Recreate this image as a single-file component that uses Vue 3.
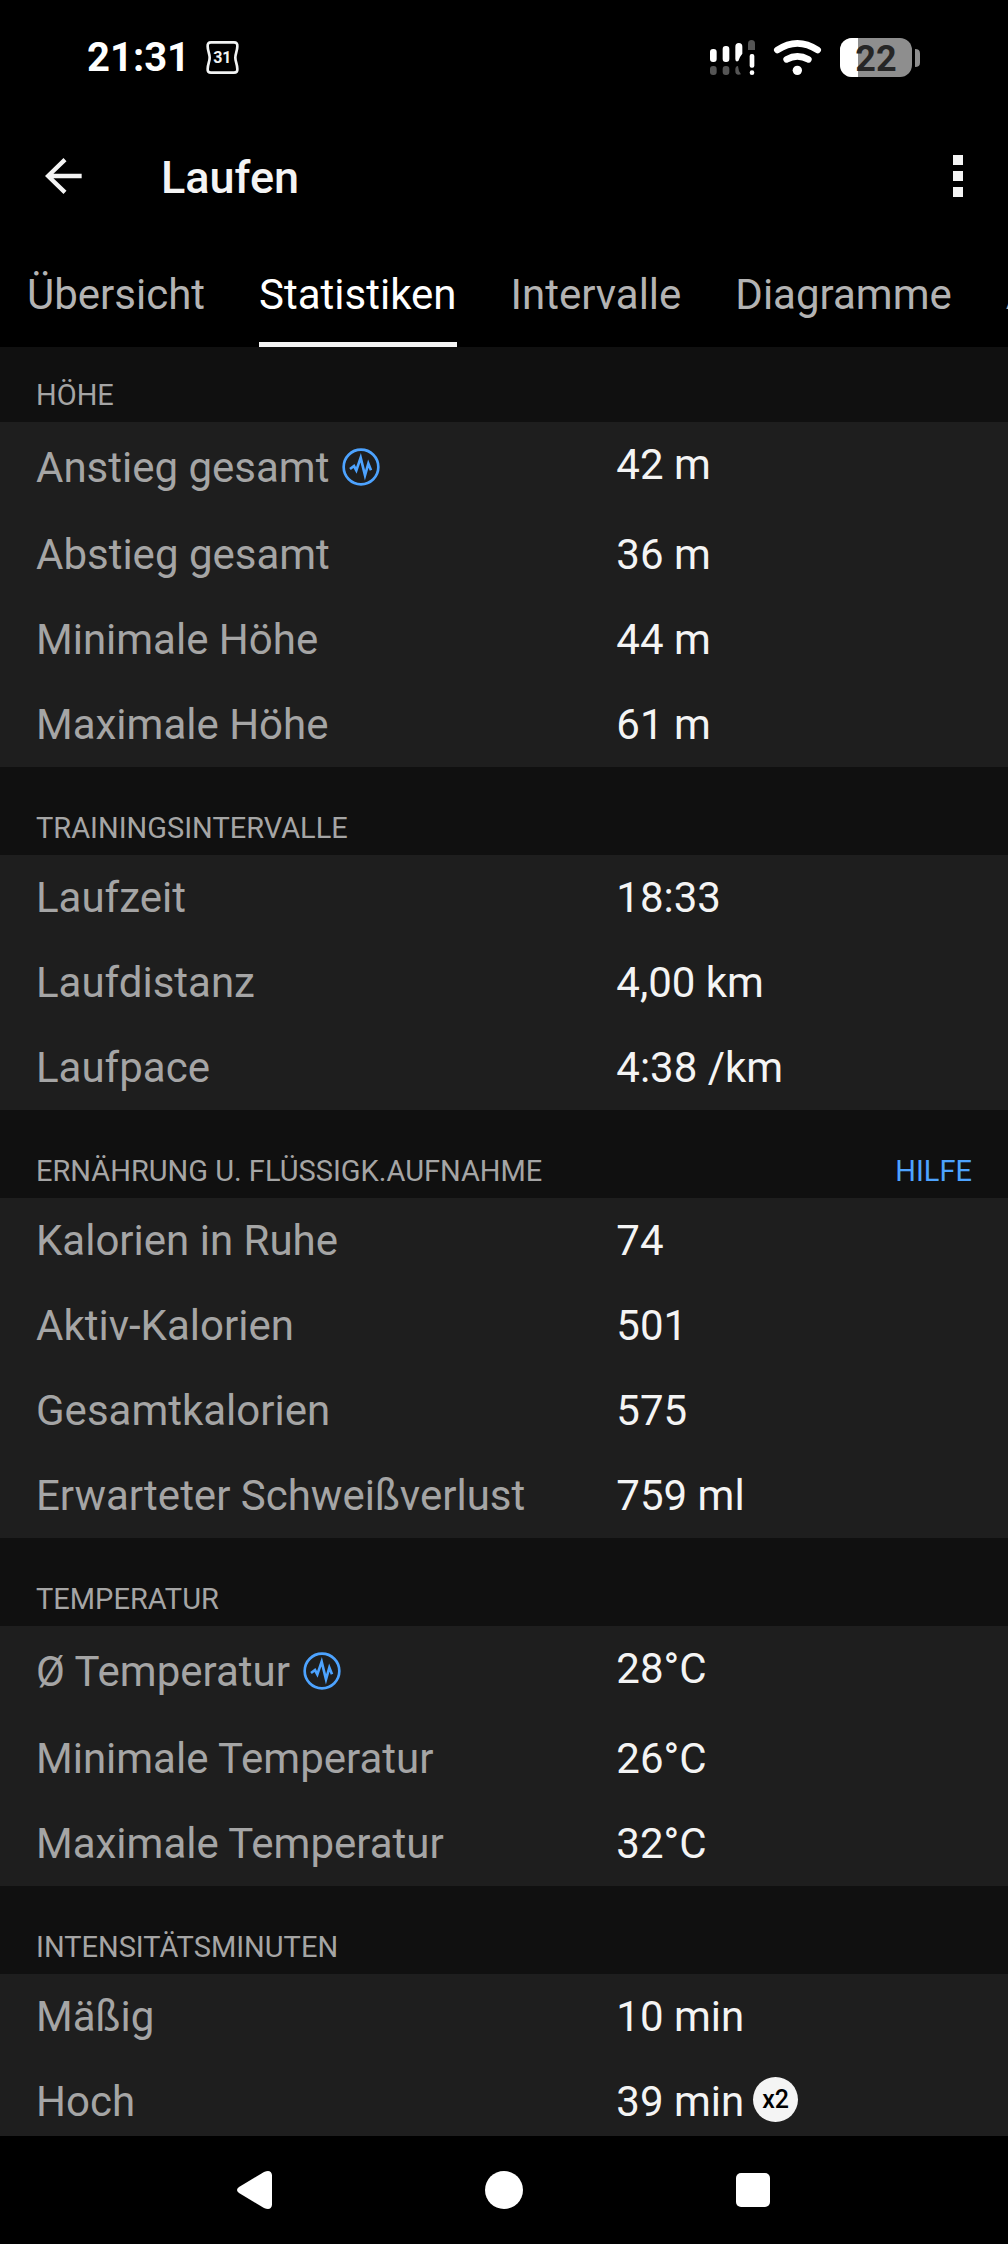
<script setup>
import { ref } from 'vue'

const tabs = ['Übersicht', 'Statistiken', 'Intervalle', 'Diagramme', 'Ausrüstung']
const activeTab = ref('Statistiken')

const sections = [
  {
    title: 'Höhe',
    rows: [
      { label: 'Anstieg gesamt', value: '42 m', chart: true },
      { label: 'Abstieg gesamt', value: '36 m' },
      { label: 'Minimale Höhe', value: '44 m' },
      { label: 'Maximale Höhe', value: '61 m' }
    ]
  },
  {
    title: 'Trainingsintervalle',
    rows: [
      { label: 'Laufzeit', value: '18:33' },
      { label: 'Laufdistanz', value: '4,00 km' },
      { label: 'Laufpace', value: '4:38 /km' }
    ]
  },
  {
    title: 'Ernährung u. Flüssigk.aufnahme',
    help: true,
    rows: [
      { label: 'Kalorien in Ruhe', value: '74' },
      { label: 'Aktiv-Kalorien', value: '501' },
      { label: 'Gesamtkalorien', value: '575' },
      { label: 'Erwarteter Schweißverlust', value: '759 ml' }
    ]
  },
  {
    title: 'Temperatur',
    rows: [
      { label: 'Ø Temperatur', value: '28°C', chart: true },
      { label: 'Minimale Temperatur', value: '26°C' },
      { label: 'Maximale Temperatur', value: '32°C' }
    ]
  },
  {
    title: 'Intensitätsminuten',
    rows: [
      { label: 'Mäßig', value: '10 min' },
      { label: 'Hoch', value: '39 min', badge: 'x2' }
    ]
  }
]
</script>

<template>
  <div class="screen">
    <!-- Status bar -->
    <div class="status-bar">
      <span class="clock">21:31</span>
      <svg class="calendar" viewBox="0 0 99 99" width="33" height="33">
        <path
          d="M15 4H84Q95 4 94 16C94 30 88 38 88 50C88 62 94 70 94 84Q95 95 84 95H15Q4 95 5 84C5 70 11 62 11 50C11 38 5 30 5 16Q4 4 15 4Z"
          fill="none"
          stroke="#f2f4f4"
          stroke-width="8"
        />
        <text x="49" y="67" text-anchor="middle" class="calendar-day">31</text>
      </svg>

      <div class="status-icons">
        <!-- Signal -->
        <svg viewBox="54 48 141 120" width="47" height="40">
          <g fill="#fff">
            <rect x="57" y="84" width="20" height="39" rx="9" />
            <rect x="95" y="75" width="20" height="48" rx="9" />
            <path d="M133 77Q133 66 143.500 66Q154 66 154 77V98Q146 107 142 120Q133 124 133 114Z" />
            <rect x="176" y="99" width="14" height="41" rx="6" />
            <circle cx="183" cy="155" r="7" />
          </g>
          <g fill="#555">
            <rect x="57" y="135" width="20" height="27" rx="9" />
            <rect x="95" y="135" width="20" height="27" rx="9" />
            <path d="M133 144Q134 135 141 135Q142 151 150 160Q133 165 133 150Z" />
            <path d="M171 87V68Q171 57 181.500 57Q192 57 192 68V87Z" />
          </g>
        </svg>
        <!-- Wifi -->
        <svg viewBox="252 48 147 120" width="49" height="40">
          <g fill="none" stroke="#fff" stroke-width="20" stroke-linecap="round">
            <path d="M265 87Q325 47 386 87" />
            <path d="M293 115Q325 97 358 115" />
          </g>
          <circle cx="325" cy="148" r="14" fill="#fff" />
        </svg>
        <!-- Battery -->
        <svg viewBox="447 48 246 123" width="82" height="41">
          <rect x="450" y="51" width="216" height="117" rx="36" fill="#8e8e8e" />
          <path d="M504 51H486A36 36 0 0 0 450 87V132A36 36 0 0 0 486 168H504Z" fill="#fff" />
          <path d="M675 84Q690 84 690 97V125Q690 138 675 138Z" fill="#8e8e8e" />
          <text x="558" y="149" text-anchor="middle" class="battery-level">22</text>
        </svg>
      </div>
    </div>

    <!-- App bar -->
    <header class="app-bar">
      <button class="icon-btn" type="button" aria-label="Zurück">
        <svg viewBox="0 0 114 108" width="38" height="36">
          <path d="M110 54H12M60 5L9 54L60 103" fill="none" stroke="#f4f4f4" stroke-width="13" />
        </svg>
      </button>
      <h1 class="title">Laufen</h1>
      <button class="icon-btn" type="button" aria-label="Mehr">
        <svg viewBox="0 0 10 42" width="10" height="42" fill="#f4f4f4">
          <rect width="10" height="10" />
          <rect y="16" width="10" height="10" />
          <rect y="32" width="10" height="10" />
        </svg>
      </button>
    </header>

    <nav class="tabs">
      <button
        v-for="tab in tabs"
        :key="tab"
        type="button"
        class="tab"
        :class="{ active: activeTab === tab }"
        @click="activeTab = tab"
      >
        {{ tab }}
      </button>
    </nav>

    <main class="content">
      <section v-for="section in sections" :key="section.title" class="section">
        <div class="section-header">
          <h2 class="section-title">{{ section.title }}</h2>
          <a v-if="section.help" href="#" class="help" @click.prevent>Hilfe</a>
        </div>
        <dl class="rows">
          <div v-for="row in section.rows" :key="row.label" class="row">
            <dt class="label" :class="{ 'with-chart': row.chart }">
              {{ row.label }}
              <svg v-if="row.chart" viewBox="0 0 114 114" width="38" height="38">
                <g fill="none" stroke="#4da3ff" stroke-width="8">
                  <circle cx="57" cy="57" r="52" />
                  <path d="M24 63L36 54L43 67L56 29L69 82L79 47L87 67" />
                </g>
              </svg>
            </dt>
            <dd class="value">
              {{ row.value }}
              <span v-if="row.badge" class="badge">{{ row.badge }}</span>
            </dd>
          </div>
        </dl>
      </section>
    </main>

    <!-- System navigation -->
    <div class="system-nav">
      <button class="nav-btn" type="button" aria-label="Zurück">
        <svg viewBox="0 0 38 38" width="38" height="38">
          <path d="M3 16L28 1Q35 -2 36 4V34Q35 40 28 37L3 22Q-1 19 3 16Z" fill="#fff" />
        </svg>
      </button>
      <button class="nav-btn" type="button" aria-label="Startbildschirm">
        <svg viewBox="0 0 38 38" width="38" height="38">
          <circle cx="19" cy="19" r="19" fill="#fff" />
        </svg>
      </button>
      <button class="nav-btn" type="button" aria-label="Letzte Apps">
        <svg viewBox="0 0 34 34" width="34" height="34">
          <rect width="34" height="34" rx="5" fill="#fff" />
        </svg>
      </button>
    </div>
  </div>
</template>

<style>
body {
  margin: 0;
  background: #000;
}
</style>

<style scoped>
.screen {
  display: flex;
  flex-direction: column;
  height: 100vh;
  background: #000;
  color: #f4f4f4;
  font-family: Roboto, sans-serif;
  font-size: 42px;
  line-height: 49px;
}

button {
  background: none;
  border: none;
  padding: 0;
  color: inherit;
  font: inherit;
  cursor: pointer;
}

svg {
  display: block;
  flex: none;
}

/* Status bar */
.status-bar {
  display: flex;
  align-items: center;
  flex: none;
  height: 114px;
  padding: 0 87px;
  box-sizing: border-box;
}

.clock {
  font-size: 40px;
  font-weight: 700;
  color: #fff;
}

.calendar {
  margin-left: 16px;
}

.calendar-day {
  font-size: 48px;
  font-weight: 700;
  fill: #f2f4f4;
}

.status-icons {
  display: flex;
  align-items: center;
  gap: 17px;
  margin-left: auto;
}

.battery-level {
  font-size: 108px;
  font-weight: 700;
  fill: #262626;
}

/* App bar */
.app-bar {
  display: flex;
  align-items: center;
  flex: none;
  height: 124px;
  padding: 0 45px;
}

.icon-btn {
  display: flex;
  align-items: center;
}

.title {
  flex: 1;
  margin: 0 0 0 78px;
  padding-top: 3px;
  font-size: 45px;
  font-weight: 500;
}

/* Tabs */
.tabs {
  display: flex;
  flex: none;
  gap: 54px;
  padding: 0 27px;
  overflow: hidden;
}

.tab {
  flex: none;
  padding: 32px 0 23px;
  border-bottom: 5px solid transparent;
  color: #b3b3b3;
}

.tab.active {
  color: #fff;
  border-bottom-color: #f4f4f4;
}

/* Sections */
.content {
  flex: 1;
  min-height: 0;
  overflow-y: auto;
  scrollbar-width: none;
  background: #101010;
}

.section-header {
  display: flex;
  justify-content: space-between;
  padding: 44px 36px 9px;
  font-size: 29px;
  line-height: 35px;
  text-transform: uppercase;
}

.section:first-child .section-header {
  padding-top: 31px;
}

.section-title {
  margin: 0;
  font-size: inherit;
  font-weight: 400;
  color: #a5a5a5;
}

.help {
  color: #4da3ff;
  text-decoration: none;
}

.rows {
  margin: 0;
  background: #1e1e1e;
}

.row {
  display: grid;
  grid-template-columns: 62fr 38fr;
  align-items: start;
  padding: 18px 36px;
}

.label {
  display: flex;
  align-items: center;
  gap: 13px;
  color: #a5a5a5;
}

.label.with-chart {
  min-height: 54px;
}

.value {
  display: flex;
  align-items: flex-start;
  gap: 9px;
  margin: 0;
}

.badge {
  width: 45px;
  height: 45px;
  border-radius: 50%;
  background: #f4f4f4;
  color: #000;
  font-size: 25px;
  font-weight: 500;
  line-height: 45px;
  text-align: center;
}

/* System navigation */
.system-nav {
  display: flex;
  flex: none;
  height: 108px;
  padding: 0 130px;
}

.nav-btn {
  display: flex;
  flex: 1;
  align-items: center;
  justify-content: center;
}
</style>
